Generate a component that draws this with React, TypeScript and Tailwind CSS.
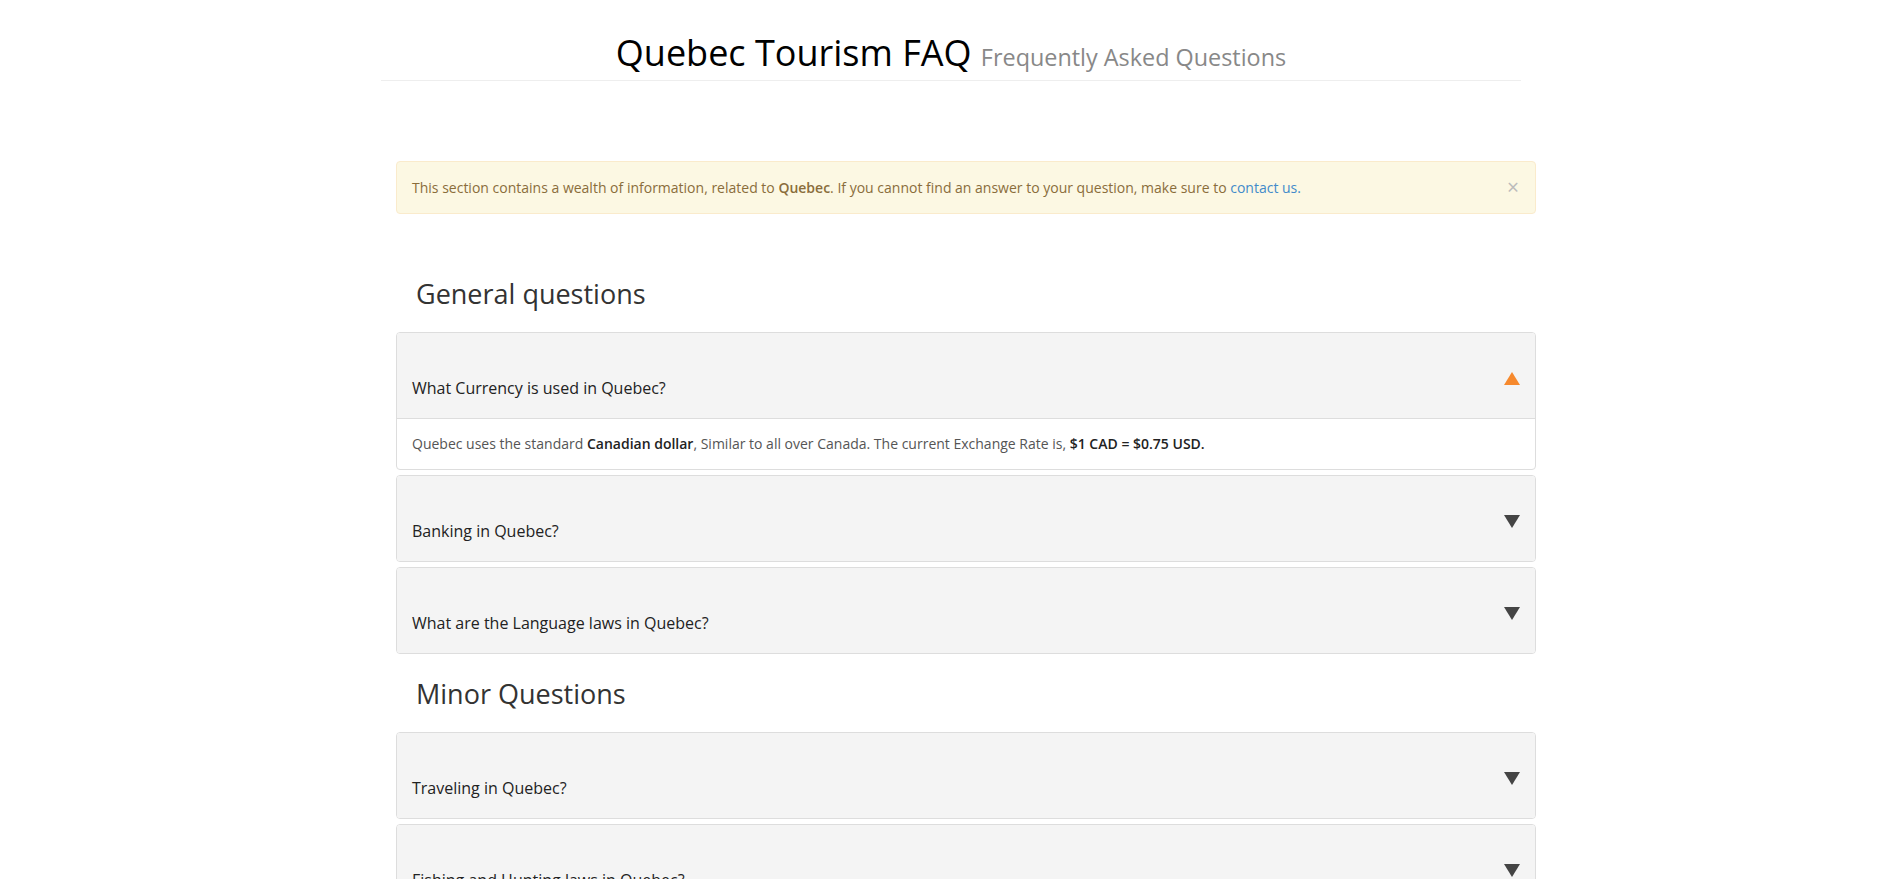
import React, { useState } from 'react';

// ============================================================================
// QUEBEC TOURISM FAQ PAGE
// ============================================================================

type Faq = {
  question: string;
  answer?: React.ReactNode;
};

const generalFaqs: Faq[] = [
  {
    question: 'What Currency is used in Quebec?',
    answer: (
      <>
        Quebec uses the standard <strong className="font-semibold text-[#222]">Canadian dollar</strong>, Similar to all
        over Canada. The current Exchange Rate is,{' '}
        <strong className="font-semibold text-[#222]">$1 CAD = $0.75 USD.</strong>
      </>
    ),
  },
  { question: 'Banking in Quebec?' },
  { question: 'What are the Language laws in Quebec?' },
];

const minorFaqs: Faq[] = [
  { question: 'Traveling in Quebec?' },
  { question: 'Fishing and Hunting laws in Quebec?' },
];

const Arrow: React.FC<{ open: boolean }> = ({ open }) => (
  <svg width="16" height="13" viewBox="0 0 16 13" className="shrink-0">
    {open ? (
      <polygon points="8,0 16,13 0,13" fill="#f6892d" />
    ) : (
      <polygon points="0,0 16,0 8,13" fill="#444444" />
    )}
  </svg>
);

const FaqPanel: React.FC<{ faq: Faq; open: boolean; onToggle: () => void }> = ({ faq, open, onToggle }) => (
  <div className="border border-[#ddd] rounded-[4px] overflow-hidden bg-white">
    <button
      onClick={onToggle}
      className="w-full h-[85px] bg-[#f4f4f4] flex items-end justify-between pl-[15px] pr-[15px] text-left cursor-pointer"
    >
      <span className="text-[16px] leading-[20px] text-[#222] pb-[20px]">{faq.question}</span>
      <span className="pb-[33px]">
        <Arrow open={open} />
      </span>
    </button>
    {open && faq.answer && (
      <div className="border-t border-[#ddd] px-[15px] py-[15px] text-[14px] leading-[20px] text-[#555]">
        <p>{faq.answer}</p>
      </div>
    )}
  </div>
);

const FaqGroup: React.FC<{ items: Faq[]; defaultOpen?: number }> = ({ items, defaultOpen = -1 }) => {
  const [openIndex, setOpenIndex] = useState(defaultOpen);
  return (
    <div className="flex flex-col gap-[5px]">
      {items.map((faq, i) => (
        <FaqPanel
          key={faq.question}
          faq={faq}
          open={openIndex === i}
          onToggle={() => setOpenIndex(openIndex === i ? -1 : i)}
        />
      ))}
    </div>
  );
};

export default function App() {
  const [showAlert, setShowAlert] = useState(true);

  return (
    <div className="min-h-screen bg-white pl-[381px] pb-[40px] font-['Open_Sans',sans-serif] text-[#333]">
      {/* Header */}
      <div className="w-[1140px] border-b border-[#eee] pt-[33px] pb-[3px] text-center">
        <h1 className="text-[36px] leading-[40px] font-normal text-black">
          Quebec Tourism FAQ <small className="text-[23.4px] text-[#888]">Frequently Asked Questions</small>
        </h1>
      </div>

      <div className="w-[1140px] ml-[15px]">
        {/* Alert */}
        {showAlert && (
          <div className="mt-[80px] bg-[#fcf8e3] border border-[#faebcc] rounded-[4px] flex items-center justify-between pl-[15px] pr-[16px] py-[15px] text-[14px] leading-[20px] text-[#8a6d3b]">
            <p>
              This section contains a wealth of information, related to <strong className="font-semibold">Quebec</strong>.
              If you cannot find an answer to your question, make sure to{' '}
              <a href="#" className="text-[#428bca]">
                contact us.
              </a>
            </p>
            <button onClick={() => setShowAlert(false)} className="text-[21px] leading-none text-[#bbb] cursor-pointer">
              ×
            </button>
          </div>
        )}

        {/* General questions */}
        <h2 className="mt-[65px] mb-[23px] pl-[20px] text-[27px] leading-[30px] font-normal text-[#333]">
          General questions
        </h2>
        <FaqGroup items={generalFaqs} defaultOpen={0} />

        {/* Minor questions */}
        <h2 className="mt-[25px] mb-[23px] pl-[20px] text-[27px] leading-[30px] font-normal text-[#333]">
          Minor Questions
        </h2>
        <FaqGroup items={minorFaqs} />
      </div>
    </div>
  );
}
